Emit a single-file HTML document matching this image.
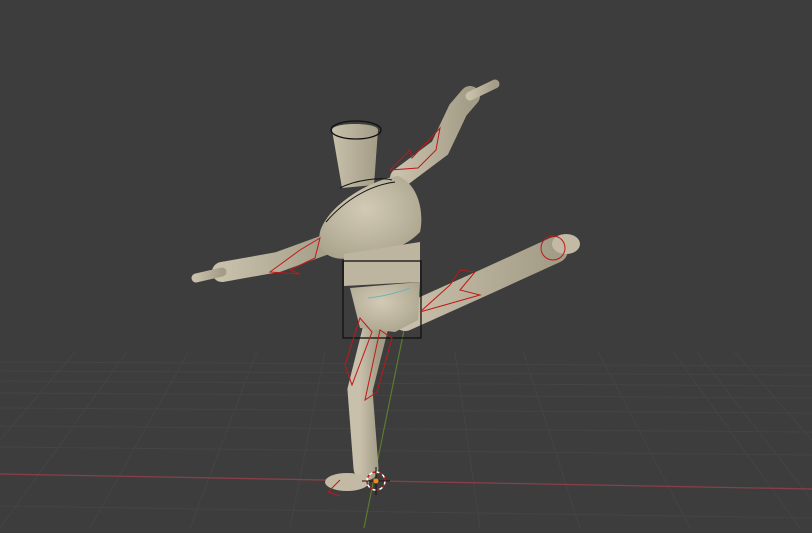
<!DOCTYPE html>
<html><head><style>html,body{margin:0;padding:0;background:#3d3d3d;overflow:hidden}</style></head>
<body>
<svg width="812" height="528" viewBox="0 0 812 528" xmlns="http://www.w3.org/2000/svg">
<defs>
<radialGradient id="b" cx="0.45" cy="0.4" r="0.7"><stop offset="0" stop-color="#d2cab5"/><stop offset="1" stop-color="#a9a28b"/></radialGradient>
<linearGradient id="l" x1="0" y1="0" x2="1" y2="0"><stop offset="0" stop-color="#c8c0aa"/><stop offset="1" stop-color="#a39c86"/></linearGradient>
</defs>
<rect width="812" height="528" fill="#3d3d3d"/>
<g stroke="#444" stroke-width="1" fill="none">
<line x1="0" y1="362" x2="812" y2="366"/>
<line x1="0" y1="371" x2="812" y2="375"/>
<line x1="0" y1="381" x2="812" y2="386"/>
<line x1="0" y1="393" x2="812" y2="398"/>
<line x1="0" y1="408" x2="812" y2="413"/>
<line x1="0" y1="426" x2="812" y2="432"/>
<line x1="0" y1="447" x2="812" y2="455"/>
<line x1="0" y1="506" x2="812" y2="518"/>
<line x1="0" y1="528" x2="380" y2="0"/>
<line x1="90" y1="528" x2="385" y2="0"/>
<line x1="190" y1="528" x2="390" y2="0"/>
<line x1="290" y1="528" x2="395" y2="0"/>
<line x1="480" y1="528" x2="405" y2="0"/>
<line x1="580" y1="528" x2="410" y2="0"/>
<line x1="690" y1="528" x2="415" y2="0"/>
<line x1="800" y1="528" x2="420" y2="0"/>
<line x1="0" y1="440" x2="375" y2="0"/>
<line x1="812" y1="440" x2="425" y2="0"/>
<line x1="812" y1="500" x2="422" y2="0"/>
</g>
<rect x="0" y="0" width="812" height="352" fill="#3d3d3d"/>
<line x1="0" y1="474" x2="812" y2="489" stroke="#8a3e48" stroke-width="1.3"/>
<line x1="404" y1="330" x2="364" y2="528" stroke="#5c7a2e" stroke-width="1.2"/>
<g stroke-linecap="round" fill="none" stroke="url(#l)">
<path d="M333 242 L278 262 L222 272" stroke-width="20"/>
<path d="M222 272 L196 278" stroke-width="9"/>
<path d="M400 178 L440 148 L458 110 L470 96" stroke-width="20"/>
<path d="M470 96 L495 84" stroke-width="9"/>
<path d="M405 318 L485 282 L555 250" stroke-width="26"/>
<path d="M378 318 L360 390 L366 468" stroke-width="25"/>
</g>
<ellipse cx="566" cy="244" rx="14" ry="10" fill="#c2baa4"/>
<ellipse cx="347" cy="482" rx="22" ry="9" fill="#c2baa4"/>
<path d="M332 130 C332 122 378 122 378 130 L374 185 L342 188 Z" fill="url(#l)"/>
<ellipse cx="356" cy="130" rx="25" ry="9" fill="none" stroke="#111" stroke-width="1.3"/>
<path d="M320 232 C328 205 370 180 398 176 C420 185 424 215 420 232 C405 248 380 255 352 258 C328 262 316 250 320 232Z" fill="url(#b)"/>
<path d="M344 254 L420 242 L420 282 L344 286Z" fill="#bdb59f"/>
<path d="M350 288 L420 282 L418 320 L395 332 L360 328 Z" fill="url(#b)"/>
<path d="M340 188 C355 180 380 177 392 180" stroke="#111" fill="none"/>
<path d="M326 222 C345 200 370 185 395 182" stroke="#111" fill="none"/>
<rect x="343" y="261" width="78" height="77" fill="none" stroke="#111" stroke-width="1.3"/>
<path d="M368 298 C385 296 400 292 410 288" stroke="#6fb5b5" fill="none"/>
<g stroke="#c01818" stroke-width="1" fill="none">
<path d="M390 170 L410 150 L412 158 L440 128 L436 150 L418 168 Z"/>
<path d="M270 272 L300 250 L320 238 L315 258 L290 270 L300 274 Z"/>
<path d="M345 365 L360 318 L372 332 L352 385 Z"/>
<path d="M365 400 L380 330 L392 338 L377 392 Z"/>
<path d="M420 312 L450 285 L460 270 L475 272 L460 290 L480 295 Z"/>
<circle cx="553" cy="248" r="12"/>
<path d="M340 480 L328 492 L340 496"/>
</g>
<circle cx="376" cy="481" r="9" fill="none" stroke="#fff" stroke-width="1.5" stroke-dasharray="4 3"/>
<circle cx="376" cy="481" r="9" fill="none" stroke="#c01818" stroke-width="1.5" stroke-dasharray="3 4" stroke-dashoffset="3.5"/>
<line x1="376" y1="467" x2="376" y2="495" stroke="#111"/>
<line x1="362" y1="481" x2="390" y2="481" stroke="#111"/>
<circle cx="376" cy="481" r="2.5" fill="#f08a1a"/>
</svg>
</body></html>
